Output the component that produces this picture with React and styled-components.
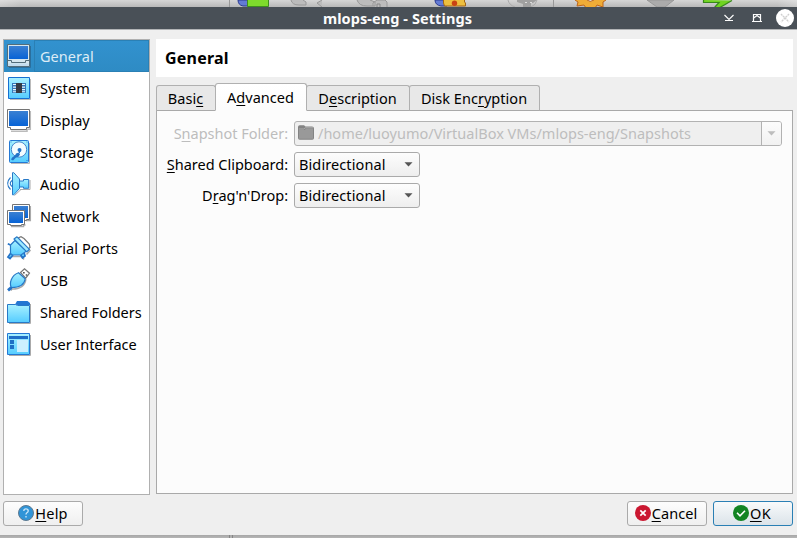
import React from "react";
import styled, { createGlobalStyle } from "styled-components";

const GlobalStyle = createGlobalStyle`
  * { box-sizing: border-box; }
  body {
    margin: 0;
    font: 400 14.5px/20px "Noto Sans", "Open Sans", sans-serif;
    letter-spacing: 0.06px;
    color: #000;
    overflow: hidden;
  }
  svg { display: block; flex: none; }
`;

const Desktop = styled.div`
  display: grid;
  grid-template-rows: 7px 23px 505px 3px;
  width: 797px;
  height: 538px;
`;

const BackToolbar = styled.div`
  background:
    linear-gradient(90deg, rgba(255,255,255,.2), rgba(255,255,255,0) 20px calc(100% - 20px), rgba(255,255,255,.25)),
    linear-gradient(#d6d6d6, #b9b9b9);
  overflow: hidden;
`;

const BackStatus = styled.div`
  display: grid;
  grid-template-columns: 229px 4px 1fr;
  background: linear-gradient(#a6a6a6, #b6b6b6);
`;

const StatusDivider = styled.div`
  grid-column: 2;
  border: solid #858585;
  border-width: 0 1px;
`;

const TitleBar = styled.header`
  display: grid;
  grid-template-columns: 99px 1fr 101px;
  align-items: center;
  background: #495057;
  border-bottom: 1px solid #b2b4b6;
`;

const Title = styled.h1`
  grid-column: 2;
  margin: 0;
  font-size: 14.5px;
  line-height: 20px;
  letter-spacing: 0.08px;
  padding-bottom: 1px;
  text-align: center;
  color: #fcfcfc;
`;

const WindowControls = styled.div`
  display: flex;
  justify-content: flex-end;
  padding-right: 2px;
`;

const Dialog = styled.main`
  display: grid;
  grid-template-columns: 147px 637px;
  grid-template-rows: 456px 25px;
  column-gap: 6px;
  row-gap: 6px;
  padding: 9px 4px 0 3px;
  background: #efefef;
`;

const Sidebar = styled.nav`
  border: 1px solid #b0b0b0;
  background: #fff;
`;

const NavItem = styled.div`
  display: grid;
  grid-template-columns: 27px 1fr;
  align-items: center;
  height: 32px;
  padding-left: 3px;
  color: ${p => (p.$selected ? "#dcecf6" : "#000")};
  background: ${p => (p.$selected ? "linear-gradient(#3292cf, #2e8bc4)" : "none")};
`;

const NavText = styled.span`
  display: flex;
  align-items: center;
  height: 32px;
  padding: 0 0 0 ${p => (p.$selected ? "5px" : "6px")};
  letter-spacing: ${p => p.$spacing ?? 0.06}px;
  white-space: nowrap;
  border: solid #2a80b5;
  border-width: ${p => (p.$selected ? "1px" : "0")};
`;

const Content = styled.section`
  display: grid;
  grid-template-rows: 38px 33px 1fr;
  min-width: 0;
  margin-bottom: 1px;
`;

const PageTitle = styled.h2`
  margin: 0;
  padding: 9px 9px 0;
  font-size: 16px;
  line-height: 21px;
  letter-spacing: 0.2px;
  background: #fff;
`;

const TabBar = styled.div`
  display: flex;
  align-items: flex-end;
  height: 34px;
  z-index: 1;
`;

const Tab = styled.div`
  height: ${p => (p.$active ? "28px" : "26px")};
  width: ${p => p.$width}px;
  margin-left: ${p => (p.$first ? "0" : "-1px")};
  padding: ${p => (p.$active ? "3px" : "2px")} 1px 0 0;
  text-align: center;
  letter-spacing: 0.03px;
  border: 1px solid #b0b0b0;
  border-bottom-color: ${p => (p.$active ? "#fcfcfc" : "#a9a9a9")};
  border-radius: 3px 3px 0 0;
  background: ${p => (p.$active ? "linear-gradient(#fff, #fcfcfc)" : "#e8e8e8")};
  z-index: ${p => (p.$active ? 1 : 0)};
`;

const TabPanel = styled.div`
  display: grid;
  grid-template-columns: 131px 488px;
  grid-template-rows: repeat(3, 25px);
  column-gap: 6px;
  row-gap: 6px;
  padding-top: 10px;
  border: 1px solid #a9a9a9;
  background: #fcfcfc;
`;

const FieldLabel = styled.label`
  padding-top: 2px;
  text-align: right;
  letter-spacing: -0.02px;
  color: ${p => (p.$disabled ? "#bdbdbd" : "#000")};
`;

const PathField = styled.div`
  display: grid;
  grid-template-columns: 20px 1fr 20px;
  height: 25px;
  padding-left: 3px;
  border: 1px solid #b2b2b2;
  border-radius: 3px;
  background: #efefef;
  color: #bdbdbd;
  overflow: hidden;
`;

const PathText = styled.span`
  padding-top: 1px;
  letter-spacing: 0.01px;
  white-space: nowrap;
`;

const PathArrow = styled.span`
  display: grid;
  place-items: center;
  border-left: 1px solid #b2b2b2;
  background: linear-gradient(#fcfcfc, #f1f1f1);
`;

const Select = styled.div`
  display: flex;
  justify-content: space-between;
  align-items: center;
  width: 126px;
  height: 25px;
  padding: 0 6px 2px 4px;
  border: 1px solid #aaa;
  border-radius: 3px;
  letter-spacing: 0.1px;
  background: linear-gradient(#fdfdfd, #eee);

  svg { margin-top: 2px; }
`;

const Footer = styled.footer`
  grid-column: 1 / 3;
  display: flex;
  gap: 6px;
`;

const Button = styled.button`
  display: flex;
  justify-content: center;
  align-items: center;
  gap: 1px;
  width: 80px;
  height: 25px;
  padding: 0 ${p => (p.$pushRest ? "0" : "2px")} 1px 0;
  margin-right: ${p => (p.$pushRest ? "auto" : "0")};
  font: inherit;
  letter-spacing: ${p => p.$spacing}px;
  color: #000;
  border: 1px solid ${p => (p.$primary ? "#2a7fb4" : "#aaa")};
  border-radius: 3px;
  background: ${p => (p.$primary ? "linear-gradient(#f8fafb, #dbe3e9)" : "linear-gradient(#fdfdfd, #efefef)")};
`;

const Mnemonic = styled.span`
  text-decoration: underline 1px;
  text-underline-offset: 2px;
  text-decoration-skip-ink: none;
`;

function Accel({ before = "", letter, after = "" }) {
  return <span>{before}<Mnemonic>{letter}</Mnemonic>{after}</span>;
}

const Arrow = ({ color = "#555" }) => (
  <svg width="9" height="5" viewBox="0 0 9 5"><path d="M.5.3h8L4.5 4.6z" fill={color} /></svg>
);

function NavIcon({ children }) {
  return (
    <svg width="26" height="24" viewBox="0 0 26 24" overflow="visible">
      <defs>
        <linearGradient id="cyan" x1="0" y1="0" x2="0" y2="1">
          <stop offset="0" stopColor="#a9f1ff" /><stop offset="1" stopColor="#55ccff" />
        </linearGradient>
        <linearGradient id="screen" x1="0" y1="0" x2="0" y2="1">
          <stop offset="0" stopColor="#3a80d2" /><stop offset="1" stopColor="#0763d6" />
        </linearGradient>
      </defs>
      {children}
    </svg>
  );
}

const drawings = {
  general: <>
    <path d="M2 23.5h21.5V2" fill="none" stroke="#2a6f9e" />
    <path d="M.5.5h22v22H.5z" fill="#d5e7ef" stroke="#526d7a" />
    <path d="M2 2h19v13H2z" fill="url(#screen)" />
    <path d="M1 16.500h3.500v2h14v-2H22" fill="none" stroke="#526d7a" />
    <path d="M1 19.500h21V22H1z" fill="#c2dced" />
  </>,
  system: <g transform="translate(0 1)">
    <path d="M3 22.500h20.500V2" fill="none" stroke="#bbb" />
    <path d="M1.500.5h21v21h-21z" fill="url(#cyan)" stroke="#1670d2" />
    <path d="M5 6h14v10H5z" fill="#3478b8" />
    <path d="M6 7h12v1H6zM6 9.500h12v1.200H6zM6 12h12v1.200H6zM6 14.300h12v1H6z" fill="#e8f8ff" />
    <path d="M9 6h6v10H9z" fill="#363a43" />
  </g>,
  display: <g transform="translate(0 1)">
    <path d="M4 22.200h16v-2h3.300V2" fill="none" stroke="#bbb" strokeWidth="1.500" />
    <path d="M.5.5h22v18h-3v2h-16v-2h-3z" fill="#fff" stroke="#747474" />
    <path d="M2 2h19v15H2z" fill="url(#screen)" />
  </g>,
  storage: <>
    <path d="M4 23.500h18.500V3" fill="none" stroke="#b9b9b9" />
    <rect x="2.500" y=".5" width="19" height="22" rx="1" fill="url(#cyan)" stroke="#2478d4" />
    <circle cx="12" cy="9.500" r="7.700" fill="#f4fcff" stroke="#4587cb" />
    <path d="M4 19.500c2-4 4-3 5-6l3-1 1 2c-1 2-2 3-4 3l-3 3z" fill="#2473c8" />
    <circle cx="12.500" cy="10" r="2" fill="#2473c8" />
    <path d="M13 10v2l-3 3" fill="none" stroke="#2473c8" />
    <path d="M3.500 1.500h1v1h-1zM19.500 1.500h1v1h-1zM19.500 20h1v1h-1z" fill="#2478d4" />
  </>,
  audio: <>
    <path d="M13 17.500h10V8M7.500 23.500L14 17.500" fill="none" stroke="#aaa" />
    <path d="M12.500 9h4V7.500h5.200v8.800h-5.200V15h-4" fill="url(#cyan)" stroke="#2879c7" />
    <path d="M5.500.7h1.300l5.700 6.300v9.500l-5.700 6.300H5.500z" fill="url(#cyan)" stroke="#2879c7" />
    <path d="M3.500 5.500Q-2.200 11.500 3.500 17.500M5 8.500Q1.500 11.500 5 14.500" fill="none" stroke="#2879c7" strokeWidth="1.100" />
  </>,
  network: <>
    <path d="M23.300 2v14.500H19M4 22.500h12.500v-1.500h2" fill="none" stroke="#aaa" strokeWidth="1.500" />
    <path d="M5.500.5h17v15h-3v1h-14z" fill="#fff" stroke="#747474" />
    <path d="M7 2h14v12H7z" fill="url(#screen)" />
    <path d="M.5 6.500h17v14h-3v1h-11v-1h-3z" fill="#fff" stroke="#747474" />
    <path d="M2 8h14v11H2z" fill="url(#screen)" />
  </>,
  serial: <>
    <path d="M11 2l3-1.300 3 1.800 5.300 5.500.7 3.500-2.500 2z" fill="#fff" stroke="#777" strokeWidth="1.200" />
    <path d="M5 20.500h10l2 3M23.500 14l-4 4.500" fill="none" stroke="#aaa" strokeWidth="1.500" />
    <path d="M3.500 9L.8 7.800M3.500 17.500L1 21l2 1.500L6 19M13.500 18.500l2 3.500 2.500-2-1-3.500" fill="url(#cyan)" stroke="#2473c8" strokeWidth="1.800" />
    <path d="M8 4.500L3.500 9v8.500l2 1.500H14l5.500-4z" fill="url(#cyan)" stroke="#2879c7" strokeWidth="1.200" strokeLinejoin="round" />
    <path d="M7 3L10 .8l12.500 12.500-2.700 2.500z" fill="#9feaff" stroke="#2879c7" strokeWidth="1.200" strokeLinejoin="round" />
  </>,
  usb: <>
    <path d="M13.500 4.500L17.500.7l5 4.500-3.800 5z" fill="#fff" stroke="#777" strokeWidth="1.200" />
    <path d="M16 4h1.700v1.600H16zM18.700 6.300h1.500v1.500h-1.500z" fill="#555" />
    <path d="M4 22.700l1-1.500c8 0 13-3 14-10" fill="none" stroke="#aaa" strokeWidth="1.300" />
    <path d="M11.500 4.700l6.700 6.100C17.500 16.500 14 19.700 4.500 19.700 2 15.500 4 7.500 11.500 4.700z" fill="url(#cyan)" stroke="#2879c7" strokeWidth="1.200" />
    <path d="M4.500 19.500L1 22.300" stroke="#2473c8" strokeWidth="3" />
  </>,
  folder: <g transform="translate(0 1)">
    <path d="M2 22.500h21.500V3" fill="none" stroke="#aaa" />
    <path d="M.5 3.500h8l2 1h12v17H.5z" fill="url(#cyan)" stroke="#2879c7" />
    <path d="M8 3.500L10 0h10.500L23 2v2H10.500z" fill="#2376d2" />
  </g>,
  ui: <g transform="translate(0 1)">
    <path d="M2 22.500h21.500V2" fill="none" stroke="#aaa" />
    <path d="M.5.500h22v21H.5z" fill="url(#cyan)" stroke="#2478d4" />
    <path d="M2 3h19v3H2zM3 7h4v4H3zM3 12h4v4H3z" fill="#1f6fc6" />
    <path d="M10 7h11v12H10z" fill="#ccefff" />
  </g>,
};

const sections = [
  ["general", "General", 0.05], ["system", "System", 0.1], ["display", "Display", 0.04],
  ["storage", "Storage", 0.12], ["audio", "Audio", 0.05], ["network", "Network", 0.18],
  ["serial", "Serial Ports", 0.06], ["usb", "USB", 0], ["folder", "Shared Folders", 0],
  ["ui", "User Interface", -0.03],
];

const ToolbarIcons = () => (
  <svg width="797" height="7" viewBox="0 0 797 7">
    <path d="M229.500 0v7M553.500 0v7" stroke="#999" />
    <path d="M238 0h12v6h-7q-5-1-5-6z" fill="#637bd5" stroke="#2b3b91" />
    <path d="M247.500-1h21v7.500h-21z" fill="#7edb2c" stroke="#3e8d1f" />
    <path d="M291 0q1 5 8 5h7V2l-3-2M322 0l-5 3 5 4M357 0q2 6 10 6h8V2l-5-2M373 6V3l4-3h8l2 2v5" fill="#bcbcbc" stroke="#989898" />
    <path d="M377 7V4h3v3" fill="none" stroke="#888" />
    <path d="M435 0h12v6h-6q-6-1-6-6z" fill="#637bd5" stroke="#2b3b91" />
    <path d="M443.500 0v3l1 3h21V3l-1-1V0" fill="#edbf3f" stroke="#a36514" />
    <circle cx="454.500" cy="3.300" r="2.700" fill="#c94313" />
    <path d="M508 0q1 5 7 7M537 0q-1 5-6 7" fill="none" stroke="#aaa" />
    <path d="M517 0h20l-4 3h-2v4h-8V4l-6-2z" fill="#a0a0a0" />
    <path d="M525 2h2v1h-2zM530 2h2v1h-2z" fill="#ddd" />
    <path d="M575 0l3 2-1 4 7-1 2 3h9l2-3 6 2v-5l3-2" fill="#efac37" stroke="#bd6419" />
    <path d="M587 0q3 3 7 0" fill="#ddd" stroke="#bd6419" />
    <path d="M647 0h27l-9 7h-8z" fill="#ababab" stroke="#989898" />
    <path d="M703.500 0v2.500H719L714 8h5l13-7.500" fill="#70d321" stroke="#37891b" strokeWidth="1.200" />
  </svg>
);

const Controls = () => (
  <svg width="78" height="22" viewBox="0 0 78 22">
    <g fill="none" stroke="#fcfcfc" strokeWidth="1.200">
      <path d="M7.500 8l4.500 4.500L16.500 8M8 13.500h8" />
      <path d="M36.500 7.500h7v7h-7zM35 14.500h10M36 11.500l4-3 4 3" />
    </g>
    <circle cx="68" cy="11" r="9" fill="#fff" />
    <path d="M64 7l8 8M72 7l-8 8" stroke="#d0d0d0" strokeWidth="1.400" strokeDasharray="2 .7" />
  </svg>
);

const FolderGlyph = () => (
  <svg width="16" height="15" viewBox="0 0 16 15">
    <path d="M0 13V2Q0 .3 1.700.3H6L7.500 1.500H14Q16 1.500 16 3.500V13q0 1.700-1.700 1.700H1.700Q0 14.700 0 13z" fill="#838383" />
    <path d="M1 5h5.500L8 3.800h7v9.900H1z" fill="#999" />
    <path d="M1 4h4.800L7.300 2.800H15" fill="none" stroke="#b8b8b8" strokeWidth=".8" />
  </svg>
);

const FolderSlot = styled.span`padding-top: 3px;`;

const HelpIcon = () => (
  <svg width="16" height="16" viewBox="0 0 16 16">
    <circle cx="8" cy="8" r="7.500" fill="#3094d7" stroke="#5d7990" />
    <path d="M5.800 6Q5.800 3.900 8 3.900T10.200 5.900Q10.200 7 8.900 7.700 8 8.200 8 9.500M8 11v1.500" fill="none" stroke="#cfe9fa" strokeWidth="1.300" />
  </svg>
);

const CancelIcon = () => (
  <svg width="16" height="16" viewBox="0 0 16 16">
    <circle cx="8" cy="8" r="8" fill="#cb1831" />
    <path d="M5.300 5.300l5.400 5.400M10.700 5.300l-5.400 5.400" stroke="#fff" strokeWidth="1.700" />
  </svg>
);

const OkIcon = () => (
  <svg width="16" height="16" viewBox="0 0 16 16">
    <circle cx="8" cy="8" r="8" fill="#128423" />
    <path d="M4 7.800l3 3 5-5" fill="none" stroke="#fff" strokeWidth="1.600" />
  </svg>
);

export default function App() {
  return (
    <Desktop>
      <GlobalStyle />
      <BackToolbar><ToolbarIcons /></BackToolbar>
      <TitleBar>
        <Title>mlops-eng - Settings</Title>
        <WindowControls><Controls /></WindowControls>
      </TitleBar>
      <Dialog>
        <Sidebar>
          {sections.map(([key, text, spacing]) => (
            <NavItem key={key} $selected={key === "general"}>
              <NavIcon>{drawings[key]}</NavIcon>
              <NavText $spacing={spacing} $selected={key === "general"}>{text}</NavText>
            </NavItem>
          ))}
        </Sidebar>
        <Content>
          <PageTitle>General</PageTitle>
          <TabBar>
            <Tab $first $width={60}><Accel before="Basi" letter="c" /></Tab>
            <Tab $active $width={92}><Accel before="A" letter="d" after="vanced" /></Tab>
            <Tab $width={104}><Accel before="D" letter="e" after="scription" /></Tab>
            <Tab $width={131}><Accel before="Disk Enc" letter="r" after="yption" /></Tab>
          </TabBar>
          <TabPanel>
            <FieldLabel $disabled><Accel before="S" letter="n" after="apshot Folder:" /></FieldLabel>
            <PathField>
              <FolderSlot><FolderGlyph /></FolderSlot>
              <PathText>/home/luoyumo/VirtualBox VMs/mlops-eng/Snapshots</PathText>
              <PathArrow><Arrow color="#bdbdbd" /></PathArrow>
            </PathField>
            <FieldLabel><Accel letter="S" after="hared Clipboard:" /></FieldLabel>
            <Select>Bidirectional<Arrow /></Select>
            <FieldLabel><Accel before="D" letter="r" after="ag'n'Drop:" /></FieldLabel>
            <Select>Bidirectional<Arrow /></Select>
          </TabPanel>
        </Content>
        <Footer>
          <Button $pushRest $spacing={0.2}><HelpIcon /><Accel letter="H" after="elp" /></Button>
          <Button $spacing={0.1}><CancelIcon /><Accel letter="C" after="ancel" /></Button>
          <Button $primary $spacing={0.4}><OkIcon /><Accel letter="O" after="K" /></Button>
        </Footer>
      </Dialog>
      <BackStatus><StatusDivider /></BackStatus>
    </Desktop>
  );
}
